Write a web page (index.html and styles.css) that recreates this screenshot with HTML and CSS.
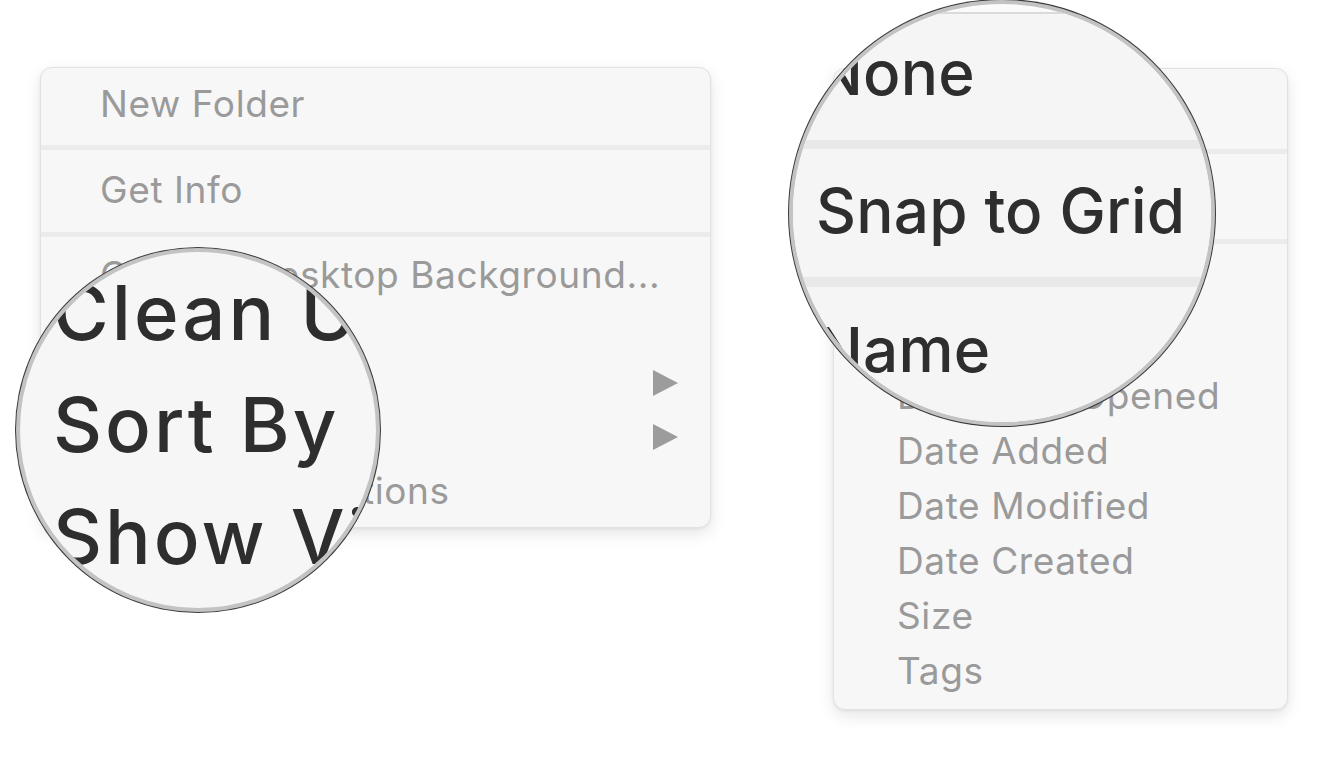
FILE: index.html
```html
<!DOCTYPE html>
<html lang="en">
<head>
<meta charset="utf-8">
<title>Desktop context menu</title>
<link rel="stylesheet" href="styles.css">
</head>
<body>
<div class="stage">
  <div class="menu menu-left">
    <div class="group g-l1"><div class="item">New Folder</div></div>
    <div class="sep"></div>
    <div class="group g-l2"><div class="item">Get Info</div></div>
    <div class="sep"></div>
    <div class="group g-l3">
      <div class="item">Change Desktop Background...</div>
      <div class="item">Clean Up</div>
      <div class="item has-sub"><span>Clean Up By</span><svg class="arrow" viewBox="0 0 25 26" width="25" height="26"><polygon points="0,0 25,13 0,26"/></svg></div>
      <div class="item has-sub"><span>Sort By</span><svg class="arrow" viewBox="0 0 25 26" width="25" height="26"><polygon points="0,0 25,13 0,26"/></svg></div>
      <div class="item">Show View Options</div>
    </div>
  </div>

  <div class="menu menu-right">
    <div class="group g-r1"><div class="item">None</div></div>
    <div class="sep"></div>
    <div class="group g-r2"><div class="item">Snap to Grid</div></div>
    <div class="sep"></div>
    <div class="group g-r3">
      <div class="item">Name</div>
      <div class="item">Kind</div>
      <div class="item">Date Last Opened</div>
      <div class="item">Date Added</div>
      <div class="item">Date Modified</div>
      <div class="item">Date Created</div>
      <div class="item">Size</div>
      <div class="item">Tags</div>
    </div>
  </div>

  <div class="lens lens-left">
    <div class="lens-line">Clean Up</div>
    <div class="lens-line">Sort By</div>
    <div class="lens-line">Show View Options</div>
  </div>

  <div class="lens lens-right">
    <div class="sheet">
      <div class="zrow zr1">None</div>
      <div class="zsep zs1"></div>
      <div class="zrow zr2">Snap to Grid</div>
      <div class="zsep zs2"></div>
      <div class="zrow zr3">Name</div>
    </div>
  </div>
</div>
</body>
</html>
```

FILE: styles.css
```css
* { box-sizing: border-box; }

html, body {
  margin: 0;
  padding: 0;
  background: #ffffff;
}

body {
  font-family: "Inter", "Liberation Sans", sans-serif;
  width: 1330px;
  height: 764px;
  overflow: hidden;
}

.stage {
  position: relative;
  display: flex;
  align-items: flex-start;
  padding: 67px 0 0 40px;
  height: 764px;
}

/* ---------- menus ---------- */
.menu {
  background: #f7f7f7;
  border: 1px solid #e1e1e1;
  border-radius: 12px;
  box-shadow: 0 6px 16px rgba(0, 0, 0, 0.10), 0 1px 3px rgba(0, 0, 0, 0.06);
}

.menu-left {
  width: 671px;
}

.menu-right {
  width: 455px;
  margin-left: 122px;
  margin-top: 1px;
}

.sep {
  height: 5px;
  background: #ebebeb;
}

.item {
  font-size: 37px;
  letter-spacing: 0.6px;
  line-height: 54px;
  color: #9a9a9a;
  white-space: nowrap;
  padding-left: 59px;
}

.menu-right .item {
  line-height: 55px;
  padding-left: 63px;
}

.has-sub {
  display: flex;
  align-items: center;
  justify-content: space-between;
  padding-right: 32px;
}

.arrow {
  display: block;
  fill: #9c9c9c;
}

.g-l1 { padding: 9px 0 14px; }
.g-l2 { padding: 13px 0 15px; }
.g-l3 { padding: 11px 0 9px; }

.g-r1 { padding: 10px 0 15px; }
.g-r2 { padding: 14px 0 16px; }
.g-r3 { padding: 14px 0 11px; }

/* ---------- magnifier lenses ---------- */
.lens {
  position: absolute;
  border-radius: 50%;
  overflow: hidden;
  border: 4px solid #c3c3c3;
  box-shadow: 0 0 0 1px #3a3a3a;
  color: #2e2e2e;
  white-space: nowrap;
}

.lens-left {
  left: 16px;
  top: 248px;
  width: 364px;
  height: 364px;
  background: #f6f6f6;
  padding: 4px 0 0 33px;
}

.lens-line {
  font-size: 76px;
  font-weight: 500;
  line-height: 112px;
  letter-spacing: 3px;
}

.lens-right {
  left: 789px;
  top: 0;
  width: 426px;
  height: 426px;
  background: #fbfbfb;
}

.sheet {
  margin-top: 8px;
  border-top: 2px solid #dadada;
  background: #f5f5f5;
  height: 420px;
  padding-left: 23px;
}

.zrow {
  font-size: 62px;
  font-weight: 500;
  line-height: 100px;
  letter-spacing: 0.2px;
}

.zsep {
  height: 9px;
  background: #e8e8e8;
  margin-left: -30px;
}

.zr1 { margin-top: 9px; }
.zs1 { margin-top: 17px; }
.zr2 { margin-top: 12px; }
.zs2 { margin-top: 16px; height: 10px; }
.zr3 { margin-top: 13px; }
```
